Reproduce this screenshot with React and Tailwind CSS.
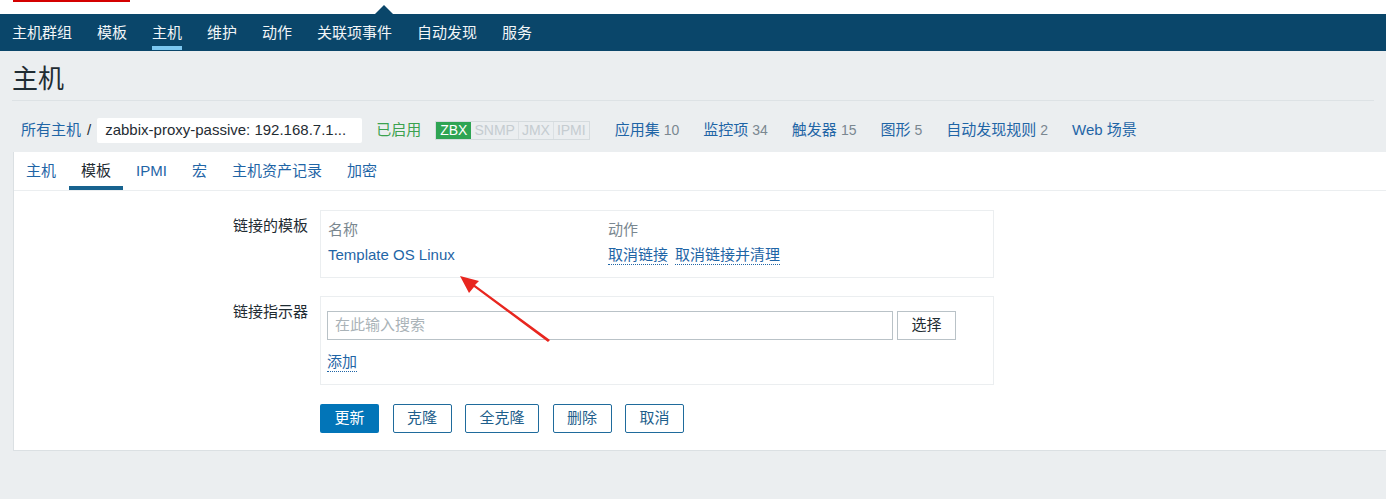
const font = { fontFamily: '"Liberation Sans", "Noto Sans CJK SC", sans-serif' };

const navItems = ['主机群组', '模板', '主机', '维护', '动作', '关联项事件', '自动发现', '服务'];
const tabs = ['主机', '模板', 'IPMI', '宏', '主机资产记录', '加密'];
const counts = [
  ['应用集', '10'],
  ['监控项', '34'],
  ['触发器', '15'],
  ['图形', '5'],
  ['自动发现规则', '2'],
  ['Web 场景', ''],
];

export default function App() {
  return (
    <div className="relative w-[1386px] h-[499px] overflow-hidden bg-[#ebeef0] text-[15px] text-[#1f2c33]" style={font}>
      {/* top strip */}
      <div className="relative h-[14px] bg-white">
        <div className="absolute left-[13px] top-0 w-[117px] h-[2px] bg-[#d40000]" />
        <div className="absolute left-[375px] top-[5px] w-0 h-0 border-l-[9px] border-r-[9px] border-b-[9px] border-l-transparent border-r-transparent border-b-[#0a466a]" />
      </div>

      {/* main nav */}
      <nav className="flex h-[37px] items-center bg-[#0a466a] pl-[12px] gap-[25px]">
        {navItems.map((n) => (
          <div key={n} className="relative h-full flex items-center pt-[2px] text-[#f2f6f8]">
            {n}
            {n === '主机' && <span className="absolute left-0 right-0 bottom-[1px] h-[4px] bg-[#7cc7f0]" />}
          </div>
        ))}
      </nav>

      {/* title */}
      <div className="mx-[12px] h-[50px] flex items-center border-b border-[#dde2e5]">
        <h1 className="text-[26px] leading-none font-normal text-[#1f2c33] mt-[6px]">主机</h1>
      </div>

      {/* breadcrumbs */}
      <div className="flex items-center h-[51px] pt-[7px] pl-[21px]">
        <span className="text-[#1f65a6]">所有主机</span>
        <span className="mx-[6px] text-[#1f2c33]">/</span>
        <span className="w-[265px] h-[25px] pl-[8px] flex items-center bg-white rounded-[2px] text-[#1f2c33] whitespace-nowrap">
          zabbix-proxy-passive: 192.168.7.1...
        </span>
        <span className="ml-[14px] text-[#3ba24f]">已启用</span>
        <span className="ml-[14px] flex items-center h-[19px] border border-[#d5dbde] text-[14px] leading-none">
          <span className="h-full px-[4px] flex items-center bg-[#2ea453] text-white">ZBX</span>
          <span className="h-full px-[3px] flex items-center text-[#c5ccd0] border-r border-[#dbe0e3]">SNMP</span>
          <span className="h-full px-[3px] flex items-center text-[#c5ccd0] border-r border-[#dbe0e3]">JMX</span>
          <span className="h-full px-[3px] flex items-center text-[#c5ccd0]">IPMI</span>
        </span>
        <div className="ml-[25px] flex items-center gap-[24px]">
          {counts.map(([a, b]) => (
            <span key={a} className="whitespace-nowrap">
              <span className="text-[#1f65a6]">{a}</span>
              {b && <span className="ml-[4px] text-[#7a8790] text-[14px]">{b}</span>}
            </span>
          ))}
        </div>
      </div>

      {/* panel */}
      <div className="ml-[13px] h-[299px] bg-white border-l border-b border-[#dbe0e3]">
        <div className="flex gap-[1px] h-[39px] border-b border-[#ebeef0]">
          {tabs.map((t) => (
            <div
              key={t}
              className={
                t === '模板'
                  ? 'h-full flex items-center px-[12px] text-[#1f2c33] border-b-[4px] border-[#17638f] pt-[4px]'
                  : 'h-full flex items-center px-[12px] text-[#1f65a6]'
              }
            >
              {t}
            </div>
          ))}
        </div>

        <div className="pt-[19px]">
          {/* linked templates */}
          <div className="flex">
            <div className="w-[306px] pr-[12px] text-right pt-[5px]">链接的模板</div>
            <div className="w-[674px] h-[68px] border border-[#ebeef0] px-[7px] pt-[7px]">
              <div className="flex h-[24px] items-center text-[#7a8790]">
                <span className="w-[280px]">名称</span>
                <span>动作</span>
              </div>
              <div className="flex h-[27px] items-center">
                <span className="w-[280px] text-[#1f65a6]">Template OS Linux</span>
                <span className="text-[#1f65a6] border-b border-dotted border-[#1f65a6] leading-[18px]">取消链接</span>
                <span className="ml-[7px] text-[#1f65a6] border-b border-dotted border-[#1f65a6] leading-[18px]">取消链接并清理</span>
              </div>
            </div>
          </div>

          {/* link indicators */}
          <div className="flex mt-[18px]">
            <div className="w-[306px] pr-[12px] text-right pt-[5px]">链接指示器</div>
            <div className="w-[674px] h-[89px] border border-[#ebeef0] px-[6px] pt-[14px]">
              <div className="flex items-center gap-[4px]">
                <div className="w-[566px] h-[29px] border border-[#b9c2c7] flex items-center px-[7px] text-[#aab3b8]">
                  在此输入搜索
                </div>
                <div className="w-[59px] h-[29px] border border-[#b9c2c7] flex items-center justify-center text-[#1f2c33]">
                  选择
                </div>
              </div>
              <div className="mt-[10px] h-[24px] flex items-center">
                <span className="text-[#1f65a6] border-b border-dotted border-[#1f65a6] leading-[18px]">添加</span>
              </div>
            </div>
          </div>

          {/* buttons */}
          <div className="flex gap-[13.5px] ml-[306px] mt-[19px]">
            <button className="w-[59px] h-[29px] bg-[#0275b8] text-white rounded-[2px]">更新</button>
            <button className="w-[59px] h-[29px] border border-[#1f6b9c] text-[#1f5f8c] rounded-[2px]">克隆</button>
            <button className="w-[74px] h-[29px] border border-[#1f6b9c] text-[#1f5f8c] rounded-[2px]">全克隆</button>
            <button className="w-[59px] h-[29px] border border-[#1f6b9c] text-[#1f5f8c] rounded-[2px]">删除</button>
            <button className="w-[59px] h-[29px] border border-[#1f6b9c] text-[#1f5f8c] rounded-[2px]">取消</button>
          </div>
        </div>
      </div>

      {/* annotation arrow */}
      <svg className="absolute left-0 top-0 pointer-events-none" width="1386" height="499">
        <polygon points="550,340 548,342 474,287 469,293 460,276 479,281 475,285" fill="#e8261f" />
      </svg>
    </div>
  );
}
